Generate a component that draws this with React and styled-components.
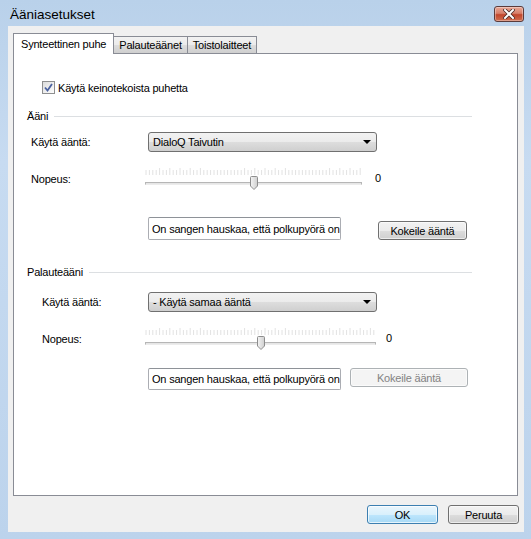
import React from 'react'
import styled, { createGlobalStyle } from 'styled-components'

const Global = createGlobalStyle`
    body {
        margin: 0;
        font-family: "Liberation Sans", Arial, sans-serif;
        font-size: 11px;
        letter-spacing: -0.2px;
        color: #000;
    }
`;

const Window = styled.div`
    width: 531px;
    height: 539px;
    box-sizing: border-box;
    padding: 0 7px 7px 8px;
    display: flex;
    flex-direction: column;
    background: linear-gradient(180deg, #b9d1ea 0%, #c7dbf1 30%, #bcd3ec 100%);
`;

const TitleBar = styled.div`
    height: 26px;
    display: flex;
    justify-content: space-between;
    align-items: flex-start;
`;

const Title = styled.div`
    padding: 7px 0 0 2px;
    font-size: 13.5px;
    letter-spacing: 0;
`;

const CloseButton = styled.div`
    margin-top: 6px;
    width: 30px;
    height: 16px;
    box-sizing: border-box;
    border: 1px solid #5b3b3b;
    border-radius: 3px;
    background: linear-gradient(180deg, #e8a796 0%, #d7806b 45%, #c1462c 55%, #cf6e50 100%);
    display: flex;
    align-items: center;
    justify-content: center;
    box-shadow: inset 0 0 0 1px rgba(255,255,255,0.35);
`;

const Client = styled.div`
    flex: 1;
    background: #f0f0f0;
    padding: 7px 6px 0 5px;
    display: flex;
    flex-direction: column;
`;

const TabStrip = styled.div`
    display: flex;
    align-items: flex-end;
    height: 21px;
    margin-bottom: -1px;
    position: relative;
    z-index: 1;
`;

const Tab = styled.div`
    box-sizing: border-box;
    height: ${p => (p.$active ? 21 : 18)}px;
    padding: 0 ${p => (p.$active ? 7 : 5)}px;
    margin-left: ${p => (p.$first ? 0 : -1)}px;
    border: 1px solid #898c95;
    border-bottom: ${p => (p.$active ? 'none' : '1px solid #898c95')};
    background: ${p => (p.$active ? '#fff' : 'linear-gradient(180deg, #f2f2f2 0%, #ebebeb 50%, #dddddd 51%, #cfcfcf 100%)')};
    display: flex;
    align-items: center;
    padding-bottom: ${p => (p.$active ? 1 : 0)}px;
`;

const Panel = styled.div`
    height: 443px;
    box-sizing: border-box;
    border: 1px solid #898c95;
    background: #fff;
    padding: 0 45px 0 13px;
    display: flex;
    flex-direction: column;
`;

const CheckRow = styled.label`
    margin-top: 26px;
    padding-left: 15px;
    height: 15px;
    display: flex;
    align-items: center;
    gap: 3px;
`;

const CheckBox = styled.span`
    width: 13px;
    height: 13px;
    box-sizing: border-box;
    border: 1px solid #8e8f8f;
    background: linear-gradient(135deg, #dcdcdc 0%, #fdfdfd 100%);
    display: flex;
    align-items: center;
    justify-content: center;
`;

const GroupHeader = styled.div`
    margin-top: ${p => p.$mt}px;
    height: 14px;
    display: flex;
    align-items: center;
    gap: 6px;
    &::after {
        content: '';
        flex: 1;
        height: 1px;
        background: #dcdfe2;
    }
`;

const Row = styled.div`
    margin-top: ${p => p.$mt}px;
    height: ${p => p.$h}px;
    display: grid;
    grid-template-columns: 121px 1fr;
    align-items: ${p => p.$align || 'center'};
`;

const Label = styled.div`
    padding-left: ${p => p.$indent}px;
    align-self: center;
`;

const Combo = styled.div`
    width: 229px;
    height: 20px;
    box-sizing: border-box;
    border: 1px solid #707070;
    border-radius: 3px;
    background: linear-gradient(180deg, #f2f2f2 0%, #ebebeb 50%, #dddddd 51%, #cfcfcf 100%);
    display: flex;
    align-items: center;
    justify-content: space-between;
    padding: 0 5px 0 4px;
`;

const Arrow = styled.span`
    width: 0;
    height: 0;
    border-left: 4px solid transparent;
    border-right: 4px solid transparent;
    border-top: 4px solid #000;
`;

const SliderWrap = styled.div`
    display: flex;
    align-items: center;
    margin-left: -3px;
`;

const Slider = styled.div`
    position: relative;
    width: ${p => p.$w}px;
    height: 26px;
`;

const Ticks = styled.svg`
    position: absolute;
    left: 0;
    top: 2px;
`;

const Track = styled.div`
    position: absolute;
    left: 0;
    right: 0;
    top: 16px;
    height: 3px;
    box-sizing: border-box;
    border: 1px solid #b6b6b6;
    border-bottom-color: #ececec;
    background: #e6e6e6;
`;

const Thumb = styled.svg`
    position: absolute;
    top: 10px;
    left: ${p => p.$x}px;
`;

const Value = styled.div`
    margin-left: ${p => p.$gap}px;
    padding-bottom: 2px;
`;

const TestRow = styled.div`
    display: flex;
    align-items: flex-start;
`;

const Input = styled.div`
    width: 193px;
    height: ${p => p.$h}px;
    box-sizing: border-box;
    border: 1px solid #abadb3;
    border-top-color: #8e9298;
    border-radius: 2px;
    background: #fff;
    padding: 0 3px;
    display: flex;
    align-items: center;
    white-space: nowrap;
    overflow: hidden;
`;

const Button = styled.div`
    width: ${p => p.$w}px;
    height: ${p => p.$h || 19}px;
    margin-left: ${p => p.$ml || 0}px;
    margin-top: ${p => p.$mt || 0}px;
    box-sizing: border-box;
    border: 1px solid ${p => (p.$disabled ? '#adb2b5' : p.$default ? '#3c7fb1' : '#707070')};
    border-radius: 3px;
    background: ${p => (p.$disabled
        ? '#f4f4f4'
        : p.$default
            ? 'linear-gradient(180deg, #eaf6fd 0%, #d9f0fc 50%, #bee6fd 51%, #a7d9f5 100%)'
            : 'linear-gradient(180deg, #f2f2f2 0%, #ebebeb 50%, #dddddd 51%, #cfcfcf 100%)')};
    box-shadow: inset 0 0 0 1px ${p => (p.$default ? 'rgba(255,255,255,0.7)' : 'rgba(255,255,255,0.6)')};
    color: ${p => (p.$disabled ? '#838383' : '#000')};
    display: flex;
    align-items: center;
    justify-content: center;
`;

const Footer = styled.div`
    display: flex;
    justify-content: flex-end;
    gap: 10px;
    padding-top: 9px;
    margin-right: -1px;
`;

function TrackBar({ width, thumb }) {
    const ticks = [];
    for (let x = 1; x < width; x += 3.4) {
        const major = Math.round(x) % 5 === 0;
        ticks.push(<line key={x} x1={x} x2={x} y1={major ? 0 : 2} y2={7} stroke="#e2e2e2" strokeWidth="1" />);
    }
    return (
        <Slider $w={width}>
            <Ticks width={width} height={8}>{ticks}</Ticks>
            <Track />
            <Thumb $x={thumb} width="8" height="14" viewBox="0 0 8 14">
                <defs>
                    <linearGradient id={`th${width}`} x1="0" x2="1">
                        <stop offset="0" stopColor="#f4f4f4" />
                        <stop offset="1" stopColor="#cfcfcf" />
                    </linearGradient>
                </defs>
                <path d="M1.5 0.5 H6.5 Q7.5 0.5 7.5 1.5 V10 L4 13.5 L0.5 10 V1.5 Q0.5 0.5 1.5 0.5 Z" fill={`url(#th${width})`} stroke="#8d8d8d" />
            </Thumb>
        </Slider>
    );
}

function VoiceGroup({ title, mt, indent, voice, slider, test }) {
    return (
        <>
            <GroupHeader $mt={mt}>{title}</GroupHeader>
            <Row $mt={voice.mt} $h={20}>
                <Label $indent={indent}>Käytä ääntä:</Label>
                <Combo>
                    <span>{voice.name}</span>
                    <Arrow />
                </Combo>
            </Row>
            <Row $mt={14} $h={26}>
                <Label $indent={indent}>Nopeus:</Label>
                <SliderWrap>
                    <TrackBar width={slider.w} thumb={slider.thumb} />
                    <Value $gap={slider.gap}>0</Value>
                </SliderWrap>
            </Row>
            <Row $mt={test.mt} $h={23} $align="start">
                <span />
                <TestRow>
                    <Input $h={test.h}>On sangen hauskaa, että polkupyörä on keksitty</Input>
                    <Button $w={test.bw} $ml={test.ml} $mt={test.bt} $disabled={test.disabled}>Kokeile ääntä</Button>
                </TestRow>
            </Row>
        </>
    );
}

export default function App() {
    return (
        <Window>
            <Global />
            <TitleBar>
                <Title>Ääniasetukset</Title>
                <CloseButton>
                    <svg width="12" height="10" viewBox="0 0 12 10">
                        <path d="M2 1 L10 9 M10 1 L2 9" stroke="#4a2a26" strokeWidth="3.6" strokeLinecap="square" />
                        <path d="M2 1 L10 9 M10 1 L2 9" stroke="#fff" strokeWidth="2" strokeLinecap="square" />
                    </svg>
                </CloseButton>
            </TitleBar>
            <Client>
                <TabStrip>
                    <Tab $active $first>Synteettinen puhe</Tab>
                    <Tab>Palauteäänet</Tab>
                    <Tab>Toistolaitteet</Tab>
                </TabStrip>
                <Panel>
                    <CheckRow>
                        <CheckBox>
                            <svg width="9" height="9" viewBox="0 0 9 9">
                                <path d="M1 4.5 L3.5 7.5 L8 1" fill="none" stroke="#4b62a0" strokeWidth="1.8" />
                            </svg>
                        </CheckBox>
                        Käytä keinotekoista puhetta
                    </CheckRow>
                    <VoiceGroup
                        title="Ääni"
                        mt={14}
                        indent={4}
                        voice={{ mt: 9, name: 'DialoQ Taivutin' }}
                        slider={{ w: 217, thumb: 105, gap: 13 }}
                        test={{ mt: 25, h: 23, bw: 89, ml: 37, bt: 4 }}
                    />
                    <VoiceGroup
                        title="Palauteääni"
                        mt={25}
                        indent={15}
                        voice={{ mt: 13, name: '- Käytä samaa ääntä' }}
                        slider={{ w: 231, thumb: 112, gap: 10 }}
                        test={{ mt: 16, h: 22, bw: 118, ml: 9, bt: 0, disabled: true }}
                    />
                </Panel>
                <Footer>
                    <Button $w={71} $default>OK</Button>
                    <Button $w={71}>Peruuta</Button>
                </Footer>
            </Client>
        </Window>
    );
}
